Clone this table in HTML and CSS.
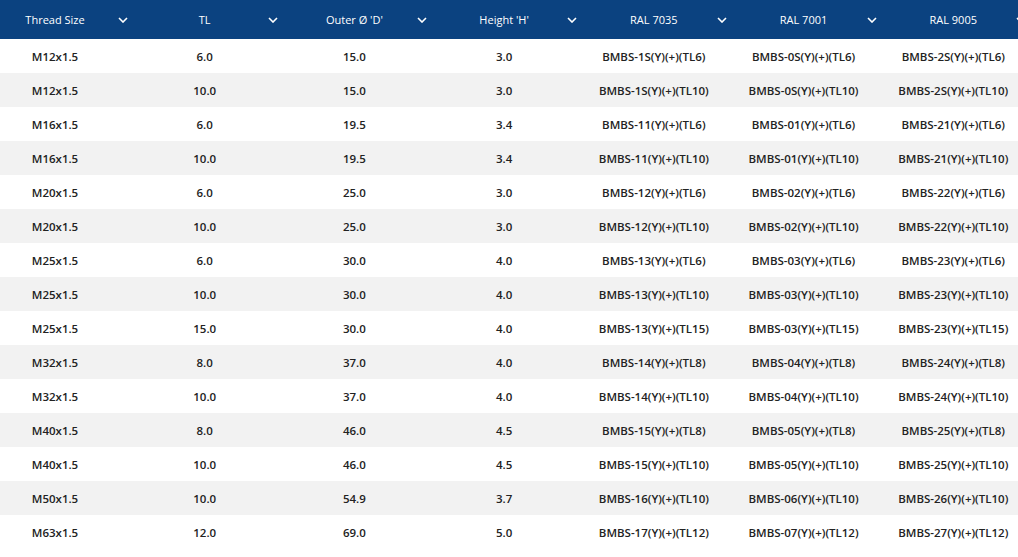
FILE: index.html
```html
<!DOCTYPE html>
<html>
<head>
<meta charset="utf-8">
<link rel="stylesheet" href="styles.css">
</head>
<body>
<div class="wrap">
<table class="spec">
<thead>
<tr>
<th><div class="hd"><span class="lbl">Thread Size</span><svg class="chev" viewBox="0 0 10 6"><path d="M1 1 L5 5 L9 1"/></svg></div></th>
<th><div class="hd"><span class="lbl">TL</span><svg class="chev" viewBox="0 0 10 6"><path d="M1 1 L5 5 L9 1"/></svg></div></th>
<th><div class="hd"><span class="lbl">Outer Ø 'D'</span><svg class="chev" viewBox="0 0 10 6"><path d="M1 1 L5 5 L9 1"/></svg></div></th>
<th><div class="hd"><span class="lbl">Height 'H'</span><svg class="chev" viewBox="0 0 10 6"><path d="M1 1 L5 5 L9 1"/></svg></div></th>
<th><div class="hd"><span class="lbl">RAL 7035</span><svg class="chev" viewBox="0 0 10 6"><path d="M1 1 L5 5 L9 1"/></svg></div></th>
<th><div class="hd"><span class="lbl">RAL 7001</span><svg class="chev" viewBox="0 0 10 6"><path d="M1 1 L5 5 L9 1"/></svg></div></th>
<th><div class="hd"><span class="lbl">RAL 9005</span><svg class="chev" viewBox="0 0 10 6"><path d="M1 1 L5 5 L9 1"/></svg></div></th>
</tr>
</thead>
<tbody>
<tr><td>M12x1.5</td><td>6.0</td><td>15.0</td><td>3.0</td><td>BMBS-1S(Y)(+)(TL6)</td><td>BMBS-0S(Y)(+)(TL6)</td><td>BMBS-2S(Y)(+)(TL6)</td></tr>
<tr><td>M12x1.5</td><td>10.0</td><td>15.0</td><td>3.0</td><td>BMBS-1S(Y)(+)(TL10)</td><td>BMBS-0S(Y)(+)(TL10)</td><td>BMBS-2S(Y)(+)(TL10)</td></tr>
<tr><td>M16x1.5</td><td>6.0</td><td>19.5</td><td>3.4</td><td>BMBS-11(Y)(+)(TL6)</td><td>BMBS-01(Y)(+)(TL6)</td><td>BMBS-21(Y)(+)(TL6)</td></tr>
<tr><td>M16x1.5</td><td>10.0</td><td>19.5</td><td>3.4</td><td>BMBS-11(Y)(+)(TL10)</td><td>BMBS-01(Y)(+)(TL10)</td><td>BMBS-21(Y)(+)(TL10)</td></tr>
<tr><td>M20x1.5</td><td>6.0</td><td>25.0</td><td>3.0</td><td>BMBS-12(Y)(+)(TL6)</td><td>BMBS-02(Y)(+)(TL6)</td><td>BMBS-22(Y)(+)(TL6)</td></tr>
<tr><td>M20x1.5</td><td>10.0</td><td>25.0</td><td>3.0</td><td>BMBS-12(Y)(+)(TL10)</td><td>BMBS-02(Y)(+)(TL10)</td><td>BMBS-22(Y)(+)(TL10)</td></tr>
<tr><td>M25x1.5</td><td>6.0</td><td>30.0</td><td>4.0</td><td>BMBS-13(Y)(+)(TL6)</td><td>BMBS-03(Y)(+)(TL6)</td><td>BMBS-23(Y)(+)(TL6)</td></tr>
<tr><td>M25x1.5</td><td>10.0</td><td>30.0</td><td>4.0</td><td>BMBS-13(Y)(+)(TL10)</td><td>BMBS-03(Y)(+)(TL10)</td><td>BMBS-23(Y)(+)(TL10)</td></tr>
<tr><td>M25x1.5</td><td>15.0</td><td>30.0</td><td>4.0</td><td>BMBS-13(Y)(+)(TL15)</td><td>BMBS-03(Y)(+)(TL15)</td><td>BMBS-23(Y)(+)(TL15)</td></tr>
<tr><td>M32x1.5</td><td>8.0</td><td>37.0</td><td>4.0</td><td>BMBS-14(Y)(+)(TL8)</td><td>BMBS-04(Y)(+)(TL8)</td><td>BMBS-24(Y)(+)(TL8)</td></tr>
<tr><td>M32x1.5</td><td>10.0</td><td>37.0</td><td>4.0</td><td>BMBS-14(Y)(+)(TL10)</td><td>BMBS-04(Y)(+)(TL10)</td><td>BMBS-24(Y)(+)(TL10)</td></tr>
<tr><td>M40x1.5</td><td>8.0</td><td>46.0</td><td>4.5</td><td>BMBS-15(Y)(+)(TL8)</td><td>BMBS-05(Y)(+)(TL8)</td><td>BMBS-25(Y)(+)(TL8)</td></tr>
<tr><td>M40x1.5</td><td>10.0</td><td>46.0</td><td>4.5</td><td>BMBS-15(Y)(+)(TL10)</td><td>BMBS-05(Y)(+)(TL10)</td><td>BMBS-25(Y)(+)(TL10)</td></tr>
<tr><td>M50x1.5</td><td>10.0</td><td>54.9</td><td>3.7</td><td>BMBS-16(Y)(+)(TL10)</td><td>BMBS-06(Y)(+)(TL10)</td><td>BMBS-26(Y)(+)(TL10)</td></tr>
<tr><td>M63x1.5</td><td>12.0</td><td>69.0</td><td>5.0</td><td>BMBS-17(Y)(+)(TL12)</td><td>BMBS-07(Y)(+)(TL12)</td><td>BMBS-27(Y)(+)(TL12)</td></tr>
</tbody>
</table>
</div>
</body>
</html>
```
FILE: styles.css
```css
html, body {
  margin: 0;
  padding: 0;
  background: #ffffff;
}
body {
  font-family: "Open Sans", "Liberation Sans", sans-serif;
  color: #222222;
}
.wrap {
  width: 1018px;
  overflow: hidden;
}
.spec {
  width: 1048px;
  table-layout: fixed;
  border-collapse: collapse;
  border-spacing: 0;
}
.spec th {
  background: #0b4280;
  height: 39px;
  padding: 0;
  font-weight: 400;
  font-size: 11px;
  color: #ffffff;
}
.hd {
  display: flex;
  align-items: center;
}
.lbl {
  width: 110px;
  text-align: center;
  white-space: nowrap;
}
.chev {
  width: 10px;
  height: 6px;
  margin-left: 8px;
  fill: none;
  stroke: #ffffff;
  stroke-width: 1.6;
}
.spec td {
  height: 34px;
  padding: 0 39.7px 0 0;
  text-align: center;
  font-size: 11.5px;
  font-weight: 600;
  white-space: nowrap;
}
.spec tbody tr:nth-child(even) td {
  background: #f2f2f2;
}
```
